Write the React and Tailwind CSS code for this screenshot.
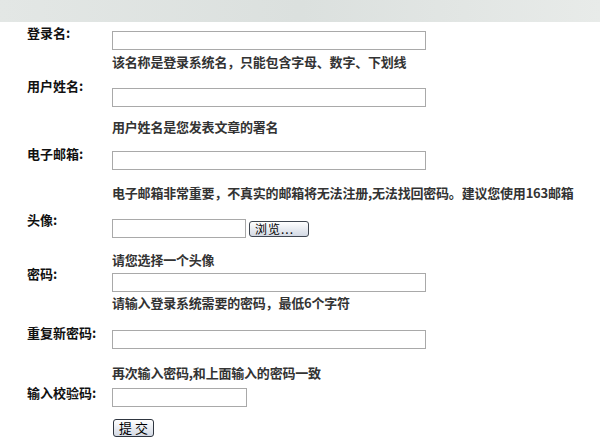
const Label = ({ children }) => (
    <div className="w-[112px] shrink-0 pl-[27px] text-[13px] leading-[15px] font-bold text-[#111]">{children}</div>
);

const Hint = ({ children, className = "" }) => (
    <div className={`text-[13px] leading-[15px] font-bold text-[#333] tracking-[-0.2px] whitespace-nowrap ${className}`}>{children}</div>
);

const TextBox = ({ className = "" }) => (
    <input type="text" className={`block h-[19px] border border-[#a9a9a9] bg-white outline-none ${className}`} />
);

const App = () => {
    return (
        <div className="w-[600px] h-[447px] overflow-hidden bg-white font-['Noto_Sans_CJK_SC','Liberation_Sans',sans-serif]">
            {/* top band */}
            <div className="h-[22px] bg-gradient-to-r from-[#e3e7e5] via-[#dbe0de] to-[#e8ebe9]"></div>

            <div className="pt-[3px]">
                {/* 登录名 */}
                <div className="flex h-[53px]">
                    <Label>登录名:</Label>
                    <div className="pt-[6px]">
                        <TextBox className="w-[314px]" />
                        <Hint className="mt-[4px]">该名称是登录系统名，只能包含字母、数字、下划线</Hint>
                    </div>
                </div>

                {/* 用户姓名 */}
                <div className="flex h-[68px]">
                    <Label>用户姓名:</Label>
                    <div className="pt-[10px]">
                        <TextBox className="w-[314px]" />
                        <Hint className="mt-[12px]">用户姓名是您发表文章的署名</Hint>
                    </div>
                </div>

                {/* 电子邮箱 */}
                <div className="flex h-[66px]">
                    <Label>电子邮箱:</Label>
                    <div className="pt-[5px]">
                        <TextBox className="w-[314px]" />
                        <Hint className="mt-[15px]">电子邮箱非常重要，不真实的邮箱将无法注册,无法找回密码。建议您使用163邮箱</Hint>
                    </div>
                </div>

                {/* 头像 */}
                <div className="flex h-[54px]">
                    <Label>头像:</Label>
                    <div className="pt-[7px]">
                        <div className="flex items-center gap-[3px]">
                            <TextBox className="w-[134px] h-[18px]" />
                            <button className="h-[16px] w-[60px] rounded-[3px] border border-[#3f4650] bg-gradient-to-b from-white to-[#d3d9e4] text-[12px] leading-[12px] text-black text-left pl-[5px] tracking-[1px]">
                                浏览...
                            </button>
                        </div>
                        <Hint className="mt-[14px]">请您选择一个头像</Hint>
                    </div>
                </div>

                {/* 密码 */}
                <div className="flex h-[59px]">
                    <Label>密码:</Label>
                    <div className="pt-[7px]">
                        <TextBox className="w-[314px]" />
                        <Hint className="mt-[3px]">请输入登录系统需要的密码，最低6个字符</Hint>
                    </div>
                </div>

                {/* 重复新密码 */}
                <div className="flex h-[60px]">
                    <Label>重复新密码:</Label>
                    <div className="pt-[5px]">
                        <TextBox className="w-[314px]" />
                        <Hint className="mt-[16px]">再次输入密码,和上面输入的密码一致</Hint>
                    </div>
                </div>

                {/* 输入校验码 */}
                <div className="flex">
                    <Label>输入校验码:</Label>
                    <div className="pt-[3px]">
                        <TextBox className="w-[135px]" />
                        <button className="mt-[12px] ml-[1px] h-[18px] w-[41px] rounded-[3px] border border-[#2f3640] bg-gradient-to-b from-white to-[#d3d9e4] text-[13px] leading-[14px] text-black">
                            提 交
                        </button>
                    </div>
                </div>
            </div>
        </div>
    );
};

export default App;
